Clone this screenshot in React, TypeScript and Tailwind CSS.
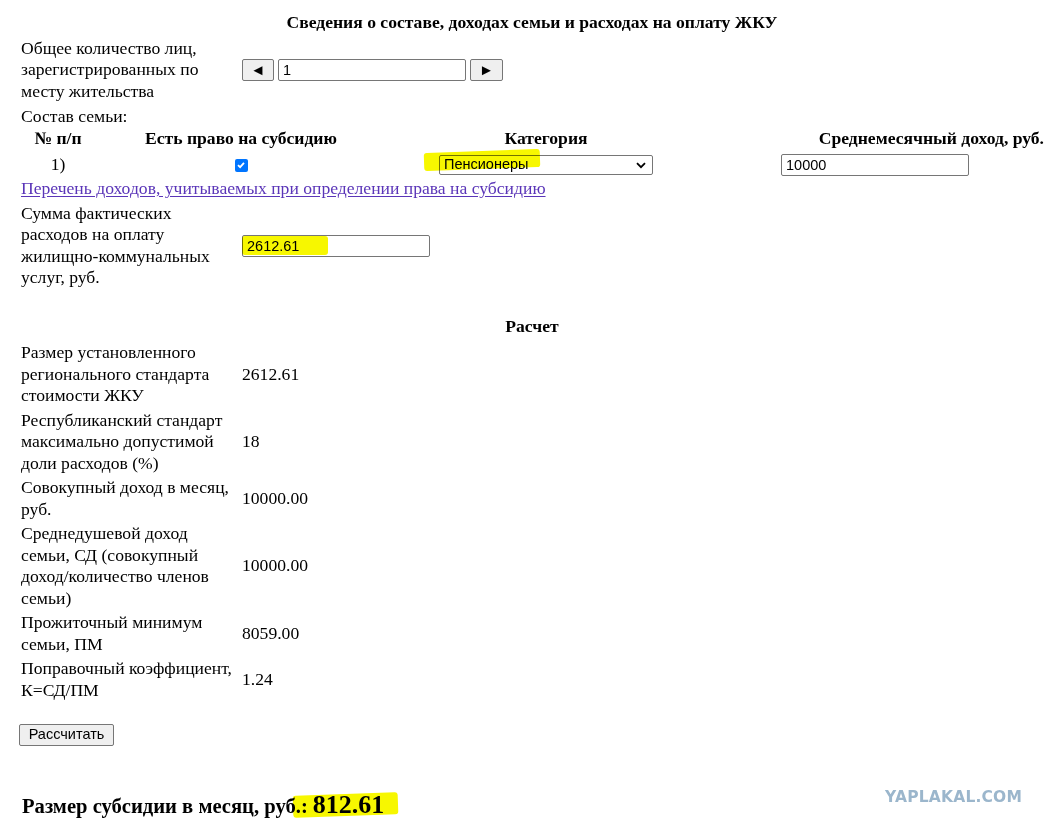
import React from 'react';

const calcRows: { label: string; value: string }[] = [
  { label: 'Размер установленного регионального стандарта стоимости ЖКУ', value: '2612.61' },
  { label: 'Республиканский стандарт максимально допустимой доли расходов (%)', value: '18' },
  { label: 'Совокупный доход в месяц, руб.', value: '10000.00' },
  { label: 'Среднедушевой доход семьи, СД (совокупный доход/количество членов семьи)', value: '10000.00' },
  { label: 'Прожиточный минимум семьи, ПМ', value: '8059.00' },
  { label: 'Поправочный коэффициент, К=СД/ПМ', value: '1.24' },
];

const inputCls =
  "h-[22px] border border-[#767676] rounded-[2px] bg-white px-[4px] font-['Liberation_Sans',Arial,sans-serif] text-[14.5px] text-black outline-none";

const btnCls =
  "h-[22px] border border-[#767676] rounded-[2px] bg-[#efefef] flex items-center justify-center font-['Liberation_Sans',Arial,sans-serif] text-black";

// marker stroke laid over a field
function Marker({ className }: { className: string }) {
  return <div className={`absolute bg-[#f7f700] mix-blend-multiply rounded-[3px] pointer-events-none ${className}`} />;
}

export default function App() {
  return (
    <div className="relative min-h-[826px] bg-white text-black font-['Liberation_Serif','Times_New_Roman',serif] text-[17.6px] leading-[21.5px] pl-[19px] pr-[2px] pt-[12px] overflow-hidden">
      <h1 className="text-center font-bold">
        Сведения о составе, доходах семьи и расходах на оплату ЖКУ
      </h1>

      {/* number of residents */}
      <div className="mt-[4px] grid grid-cols-[223px_1fr] items-center">
        <div className="pl-[2px] pr-[10px]">Общее количество лиц, зарегистрированных по месту жительства</div>
        <div className="flex items-center gap-[4px]">
          <button className={`${btnCls} w-[32px] text-[15px]`}>◄</button>
          <input className={`${inputCls} w-[188px]`} defaultValue="1" />
          <button className={`${btnCls} w-[33px] text-[15px]`}>►</button>
        </div>
      </div>

      <div className="pl-[2px] mt-[4px]">Состав семьи:</div>

      {/* family members table */}
      <div className="grid grid-cols-[78px_288px_322px_1fr] font-bold">
        <div className="text-center">№ п/п</div>
        <div className="text-center">Есть право на субсидию</div>
        <div className="text-center">Категория</div>
        <div className="text-right pr-[1px]">Среднемесячный доход, руб.</div>
      </div>
      <div className="mt-[3px] grid grid-cols-[78px_288px_322px_1fr] items-center h-[26px]">
        <div className="text-center">1)</div>
        <div className="flex justify-center">
          <span className="w-[13px] h-[13px] rounded-[2px] bg-[#0075ff] flex items-center justify-center">
            <svg width="10" height="10" viewBox="0 0 10 10">
              <path d="M2 5.2 L4.1 7.2 L8 2.8" stroke="white" strokeWidth="1.8" fill="none" />
            </svg>
          </span>
        </div>
        <div className="flex justify-center">
          <div className="w-[214px] h-[20px] border border-[#767676] rounded-[2px] bg-white flex items-center justify-between pl-[4px] pr-[6px] font-['Liberation_Sans',Arial,sans-serif] text-[14.5px]">
            <span>Пенсионеры</span>
            <svg width="10" height="7" viewBox="0 0 10 7">
              <path d="M1 1.2 L5 5.2 L9 1.2" stroke="black" strokeWidth="1.8" fill="none" />
            </svg>
          </div>
        </div>
        <div className="pl-[74px]">
          <input className={`${inputCls} w-[188px]`} defaultValue="10000" />
        </div>
      </div>

      <a href="#" className="block pl-[2px] text-[#5a35b8] underline underline-offset-[2px]">
        Перечень доходов, учитываемых при определении права на субсидию
      </a>

      {/* actual housing expenses */}
      <div className="mt-[3px] grid grid-cols-[223px_1fr] items-center">
        <div className="pl-[2px] pr-[10px]">Сумма фактических расходов на оплату жилищно-коммунальных услуг, руб.</div>
        <div>
          <input className={`${inputCls} w-[188px]`} defaultValue="2612.61" />
        </div>
      </div>

      <h2 className="text-center font-bold mt-[27px]">Расчет</h2>

      {/* calculation results */}
      <div className="mt-[5px] flex flex-col gap-[3px]">
        {calcRows.map((r) => (
          <div key={r.label} className="grid grid-cols-[223px_1fr] items-center">
            <div className="pl-[2px] pr-[8px]">{r.label}</div>
            <div>{r.value}</div>
          </div>
        ))}
      </div>

      <button className={`${btnCls} mt-[23px] w-[95px] px-[6px] text-[14.5px]`}>Рассчитать</button>

      <div className="mt-[45px] pl-[3px] font-bold text-[20.6px] leading-[28px] flex items-baseline">
        <span>Размер субсидии в месяц, руб.:</span>
        <span className="ml-[5px] text-[26px]">812.61</span>
      </div>

      <div className="absolute left-[885px] top-[787px] font-['DejaVu_Sans',sans-serif] font-black text-[15.5px] tracking-[0.2px] text-[#9bb6cc]">
        YAPLAKAL.COM
      </div>

      <Marker className="left-[424px] top-[151px] w-[116px] h-[18px] -rotate-[2deg]" />
      <Marker className="left-[242px] top-[236px] w-[86px] h-[19px]" />
      <Marker className="left-[293px] top-[794px] w-[105px] h-[22px] -rotate-[2deg]" />
    </div>
  );
}
